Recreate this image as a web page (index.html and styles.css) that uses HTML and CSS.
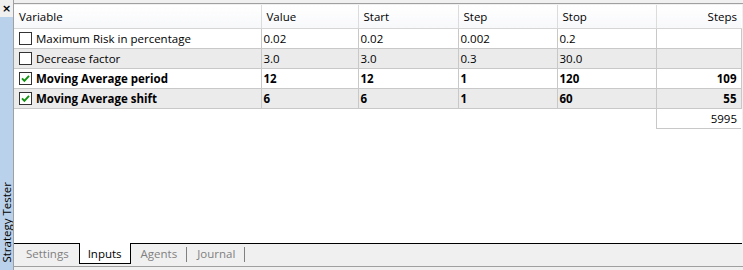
FILE: index.html
```html
<!DOCTYPE html>
<html lang="en">
<head>
  <meta charset="UTF-8" />
  <title>Strategy Tester - Inputs</title>
  <link rel="stylesheet" href="styles.css">
</head>
<body>
  <div class="frame">
    <div class="side">
      <div class="close">&times;</div>
      <div class="side-title"><span>Strategy Tester</span></div>
    </div>

    <div class="main">
      <div class="top-rule"></div>

      <div class="grid-area">
        <table class="inputs">
          <colgroup>
            <col class="c-var"><col class="c-val"><col class="c-start">
            <col class="c-step"><col class="c-stop"><col class="c-steps">
          </colgroup>
          <thead>
            <tr>
              <th>Variable</th>
              <th>Value</th>
              <th>Start</th>
              <th>Step</th>
              <th>Stop</th>
              <th class="num">Steps</th>
            </tr>
          </thead>
          <tbody>
            <tr>
              <td><span class="check"></span>Maximum Risk in percentage</td>
              <td>0.02</td>
              <td>0.02</td>
              <td>0.002</td>
              <td>0.2</td>
              <td class="num"></td>
            </tr>
            <tr class="alt">
              <td><span class="check"></span>Decrease factor</td>
              <td>3.0</td>
              <td>3.0</td>
              <td>0.3</td>
              <td>30.0</td>
              <td class="num"></td>
            </tr>
            <tr class="on">
              <td><span class="check"><svg viewBox="0 0 13 13" width="13" height="13"><path d="M3 6.3 L5.4 8.8 L10 3.8" fill="none" stroke="#129312" stroke-width="1.9"/></svg></span>Moving Average period</td>
              <td>12</td>
              <td>12</td>
              <td>1</td>
              <td>120</td>
              <td class="num">109</td>
            </tr>
            <tr class="on alt">
              <td><span class="check"><svg viewBox="0 0 13 13" width="13" height="13"><path d="M3 6.3 L5.4 8.8 L10 3.8" fill="none" stroke="#129312" stroke-width="1.9"/></svg></span>Moving Average shift</td>
              <td>6</td>
              <td>6</td>
              <td>1</td>
              <td>60</td>
              <td class="num">55</td>
            </tr>
            <tr class="total">
              <td></td><td></td><td></td><td></td><td></td>
              <td class="num">5995</td>
            </tr>
          </tbody>
        </table>
      </div>

      <div class="tabs">
        <div class="tab">Settings</div>
        <div class="tab active">Inputs</div>
        <div class="tab sep">Agents</div>
        <div class="tab sep">Journal</div>
      </div>
      <div class="bottom-rule"></div>
    </div>
  </div>
</body>
</html>
```

FILE: styles.css
```css
* {
  box-sizing: border-box;
}

body {
  margin: 0;
  background-color: #f0f0f0;
  font-family: 'Open Sans', 'DejaVu Sans', sans-serif;
  font-size: 11.5px;
  color: #000;
}

.frame {
  display: flex;
  width: 743px;
  height: 270px;
}

/* left docked strip */
.side {
  width: 14px;
  display: flex;
  flex-direction: column;
  border-right: 1px solid #a0a0a0;
}

.close {
  height: 17px;
  background-color: #f0f0f0;
  font-family: 'DejaVu Sans', sans-serif;
  font-weight: bold;
  font-size: 11px;
  line-height: 17px;
  text-align: center;
}

.side-title {
  flex: 1;
  background-color: #b9d1ea;
  display: flex;
  align-items: flex-end;
  justify-content: center;
  overflow: hidden;
}

.side-title span {
  writing-mode: vertical-rl;
  transform: rotate(180deg);
  font-size: 11.5px;
  line-height: 13px;
  white-space: nowrap;
  padding-top: 7px;
}

/* main panel */
.main {
  flex: 1;
  display: flex;
  flex-direction: column;
}

.top-rule {
  height: 5px;
  border-top: 3px solid #f0f0f0;
  background-color: #a0a0a0;
  border-bottom: 1px solid #f0f0f0;
}

.grid-area {
  flex: 1;
  background-color: #fff;
  margin-right: 1px;
}

.inputs {
  border-collapse: collapse;
  table-layout: fixed;
  width: 727px;
}

.c-var { width: 247px; }
.c-val { width: 97px; }
.c-start { width: 100px; }
.c-step { width: 99px; }
.c-stop { width: 99px; }
.c-steps { width: 85px; }

.inputs th {
  height: 23px;
  font-weight: normal;
  text-align: left;
  padding: 0 5px;
  background: linear-gradient(#ffffff, #f7f8fa);
  border-left: 1px solid #dcdcdc;
  border-bottom: 1px solid #d5d5d5;
}

.inputs th:first-child {
  border-left: none;
}

.inputs td {
  height: 20px;
  padding: 0 2px;
  border: 1px solid #c8c8c8;
  white-space: nowrap;
}

.inputs td:first-child {
  border-left: none;
  padding-left: 5px;
}

.inputs .num {
  text-align: right;
  padding-right: 4px;
}

.alt td {
  background-color: #ebebeb;
}

.on td {
  font-weight: bold;
}

.total td {
  border: none;
}

.total td.num {
  border-left: 1px solid #c8c8c8;
  border-bottom: 1px solid #c8c8c8;
}

.check {
  display: inline-block;
  width: 13px;
  height: 13px;
  border: 1px solid #333;
  background-color: #fff;
  vertical-align: -2px;
  margin-right: 4px;
  position: relative;
}

.check svg {
  position: absolute;
  left: -1px;
  top: -1px;
}

/* bottom tabs */
.tabs {
  height: 23px;
  display: flex;
  border-top: 1px solid #000;
  padding-left: 2px;
  margin-right: 1px;
}

.tab {
  padding: 0 10px;
  line-height: 20px;
  color: #808080;
}

.tab.active {
  color: #000;
  background-color: #fff;
  border: 1px solid #000;
  border-top: none;
  margin-top: -1px;
  padding: 1px 8px 0;
  height: 21px;
}

.tab.sep {
  position: relative;
}

.tab.sep::after {
  content: "";
  position: absolute;
  right: 0;
  top: 3px;
  height: 15px;
  border-right: 1px solid #808080;
}

.bottom-rule {
  height: 4px;
  background-color: #f0f0f0;
  box-shadow: inset 0 1px 0 #a0a0a0;
}
```
